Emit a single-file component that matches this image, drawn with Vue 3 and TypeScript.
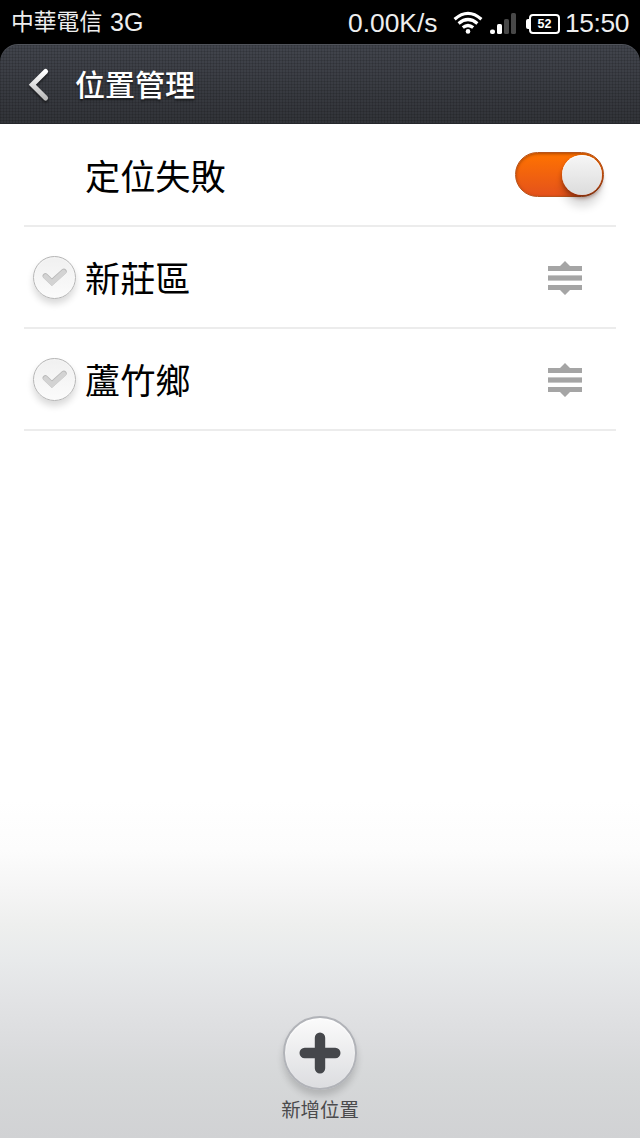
<script setup lang="ts">
import { ref } from 'vue'

interface Place {
  id: number
  name: string
}

const autoLocate = ref<boolean>(true)
const places = ref<Place[]>([
  { id: 1, name: '新莊區' },
  { id: 2, name: '蘆竹鄉' },
])
</script>

<template>
  <div class="screen">
    <div class="top">
      <header class="status">
        <div class="carrier"><span class="carrier-name">中華電信</span><span class="net">3G</span></div>
        <div class="indicators">
          <span class="speed">0.00K/s</span>
          <svg class="wifi" width="30" height="24" viewBox="0 0 30 24" fill="none" stroke="#fff" stroke-width="3.2">
            <path d="M1.6 8.3Q15 -3.6 28.4 8.3" />
            <path d="M5.6 12.4Q15 4.6 24.4 12.4" />
            <path d="M9.8 16.6Q15 12.4 20.2 16.6" />
            <circle cx="15" cy="20.4" r="2.3" fill="#fff" stroke="none" />
          </svg>
          <svg class="signal" width="27" height="22" viewBox="0 0 27 22">
            <rect x="0" y="16.5" width="5" height="4.6" rx="2" fill="#fff" />
            <rect x="7" y="11" width="5" height="10" rx="1.6" fill="#fff" />
            <rect x="14" y="6" width="5" height="15" rx="1.6" fill="#484848" />
            <rect x="21" y="0" width="5" height="21" rx="1.6" fill="#484848" />
          </svg>
          <span class="battery">52</span>
          <span class="clock">15:50</span>
        </div>
      </header>

      <nav class="bar">
        <svg class="back" width="24" height="36" viewBox="0 0 24 36" fill="none">
          <defs>
            <linearGradient id="chev" x1="0" y1="0" x2="0" y2="1">
              <stop offset="0" stop-color="#fff" />
              <stop offset="1" stop-color="#bcbcbc" />
            </linearGradient>
          </defs>
          <path d="M18.6 4.4L5.3 17.7L18.6 31" stroke="url(#chev)" stroke-width="5" stroke-linecap="round" />
        </svg>
        <h1 class="title">位置管理</h1>
      </nav>
    </div>

    <main class="list">
      <div class="row">
        <span class="name">定位失敗</span>
        <button class="toggle" :class="{ on: autoLocate }" @click="autoLocate = !autoLocate">
          <span class="knob"></span>
        </button>
      </div>
      <div v-for="place in places" :key="place.id" class="row">
        <span class="check">
          <svg width="26" height="19" viewBox="0 0 26 19" fill="none" stroke-linecap="round" stroke-linejoin="miter">
            <path d="M3.4 8L9.9 14.2L21.9 3.4" stroke="#b9b9b9" stroke-width="5.6" />
            <path d="M3.6 8.6L9.9 14.7L21.7 4.1" stroke="#d3d3d3" stroke-width="4.8" />
          </svg>
        </span>
        <span class="name">{{ place.name }}</span>
        <svg class="handle" width="34" height="34" viewBox="0 0 34 34" fill="#a5a5a5">
          <path d="M0 5H12L17 0L22 5H34V10H0Z" />
          <rect y="14.4" width="34" height="5.2" />
          <path d="M0 24H34V29H22L17 34L12 29H0Z" />
        </svg>
      </div>
    </main>

    <footer class="footer">
      <button class="add">
        <svg width="42" height="42" viewBox="0 0 42 42" stroke="#45474b" stroke-width="10.4" stroke-linecap="round">
          <path d="M21 5.7V36.3M5.7 21H36.3" />
        </svg>
      </button>
      <span class="add-label">新增位置</span>
    </footer>
  </div>
</template>

<style>
body {
  margin: 0;
  background: #000;
}
</style>

<style scoped>
.screen {
  width: 640px;
  height: 1138px;
  overflow: hidden;
  display: flex;
  flex-direction: column;
  background: linear-gradient(180deg, #fff 0, #fff 800px, #fcfcfc 850px, #f5f5f5 890px, #eeefee 925px, #e8eaeb 960px, #e2e3e5 1000px, #dbdcde 1045px, #d6d8d9 1075px, #d1d2d4 1137px);
  font-family: "Liberation Sans", "Noto Sans CJK TC", sans-serif;
}
.top {
  flex: none;
  background: #000;
}
.status {
  height: 44px;
  color: #eee;
  display: flex;
  justify-content: space-between;
}
.carrier {
  display: flex;
  padding-left: 11px;
  line-height: 44px;
}
.carrier-name {
  font-size: 22.8px;
  width: 99px;
}
.net {
  font-size: 25px;
}
.indicators {
  display: flex;
  padding-right: 11px;
  line-height: 47px;
  font-size: 26.4px;
}
.speed {
  width: 105px;
}
.wifi {
  margin-top: 11px;
}
.signal {
  margin: 13px 0 0 7px;
}
.battery {
  position: relative;
  box-sizing: border-box;
  width: 31px;
  height: 20px;
  margin: 14px 5px 0 12px;
  border: 2px solid #fff;
  border-radius: 4px;
  font: bold 12.5px/17px "Liberation Sans", sans-serif;
  text-align: center;
  color: #fff;
}
.battery::before {
  content: "";
  position: absolute;
  left: -5px;
  top: 3px;
  width: 4px;
  height: 10px;
  border-radius: 2px 0 0 2px;
  background: #fff;
}
.clock {
  width: 64px;
  letter-spacing: -0.4px;
  white-space: nowrap;
}
.bar {
  box-sizing: border-box;
  height: 80px;
  display: flex;
  padding-left: 27px;
  border-radius: 18px 18px 0 0;
  box-shadow: inset 0 1px 0 #50535a, inset 0 -1px 0 #25272b;
  background:
    repeating-linear-gradient(0deg, rgba(0, 0, 0, 0.12) 0 1px, transparent 1px 3px),
    repeating-linear-gradient(90deg, rgba(0, 0, 0, 0.12) 0 1px, transparent 1px 3px),
    linear-gradient(#42454d, #313338);
}
.back {
  margin-top: 23px;
  filter: drop-shadow(0 2px 1px rgba(0, 0, 0, 0.5));
}
.title {
  margin: 0 0 0 24px;
  font-size: 30px;
  line-height: 84px;
  font-weight: 500;
  color: #fff;
  text-shadow: 0 2px 2px rgba(0, 0, 0, 0.5);
}
.list {
  margin: 1px 24px 0;
}
.row {
  box-sizing: border-box;
  height: 102px;
  border-bottom: 2px solid #ececec;
  display: grid;
  grid-template-columns: 61px 1fr auto;
}
.name {
  grid-column: 2;
  font-size: 35.2px;
  line-height: 105px;
  color: #000;
}
.toggle {
  box-sizing: border-box;
  width: 89px;
  height: 45px;
  margin: 27px 12px 0 0;
  padding: 2px 1px;
  border: 1px solid #b9541b;
  border-radius: 23px;
  background: #ccc;
  display: flex;
}
.toggle.on {
  justify-content: flex-end;
  background: linear-gradient(#ff7300, #e4521c);
  box-shadow: inset 0 1px 3px rgba(130, 50, 0, 0.65);
}
.knob {
  width: 40px;
  height: 40px;
  border-radius: 50%;
  background: linear-gradient(#f6f6f6, #dcdcdc);
  box-shadow: inset 0 1px 1px #fff, 0 3px 4px rgba(80, 20, 0, 0.5), 0 12px 8px rgba(0, 0, 0, 0.13);
}
.check {
  box-sizing: border-box;
  width: 43px;
  height: 43px;
  margin: 29px 0 0 9px;
  border: 1px solid #b5b5b5;
  border-radius: 50%;
  background: linear-gradient(#f0f0f0, #fbfbfb);
  box-shadow: inset 0 0 2px #fff, 0 5px 7px rgba(0, 0, 0, 0.15);
  display: flex;
  align-items: center;
  justify-content: center;
}
.check svg {
  flex: none;
}
.handle {
  margin: 34px 34px 0 0;
}
.footer {
  margin-top: auto;
  height: 122px;
  display: flex;
  flex-direction: column;
  align-items: center;
}
.add {
  box-sizing: border-box;
  flex: none;
  width: 74px;
  height: 74px;
  padding: 0;
  border: 2px solid #b1b3b8;
  border-radius: 50%;
  background: linear-gradient(#fbfbfb, #dcdde0);
  box-shadow: inset 0 1px 2px #fff, 0 6px 7px rgba(0, 0, 0, 0.16);
  display: flex;
  align-items: center;
  justify-content: center;
}
.add-label {
  margin-top: 5px;
  font-size: 19.4px;
  line-height: 30px;
  color: #4b4b4d;
}
</style>
